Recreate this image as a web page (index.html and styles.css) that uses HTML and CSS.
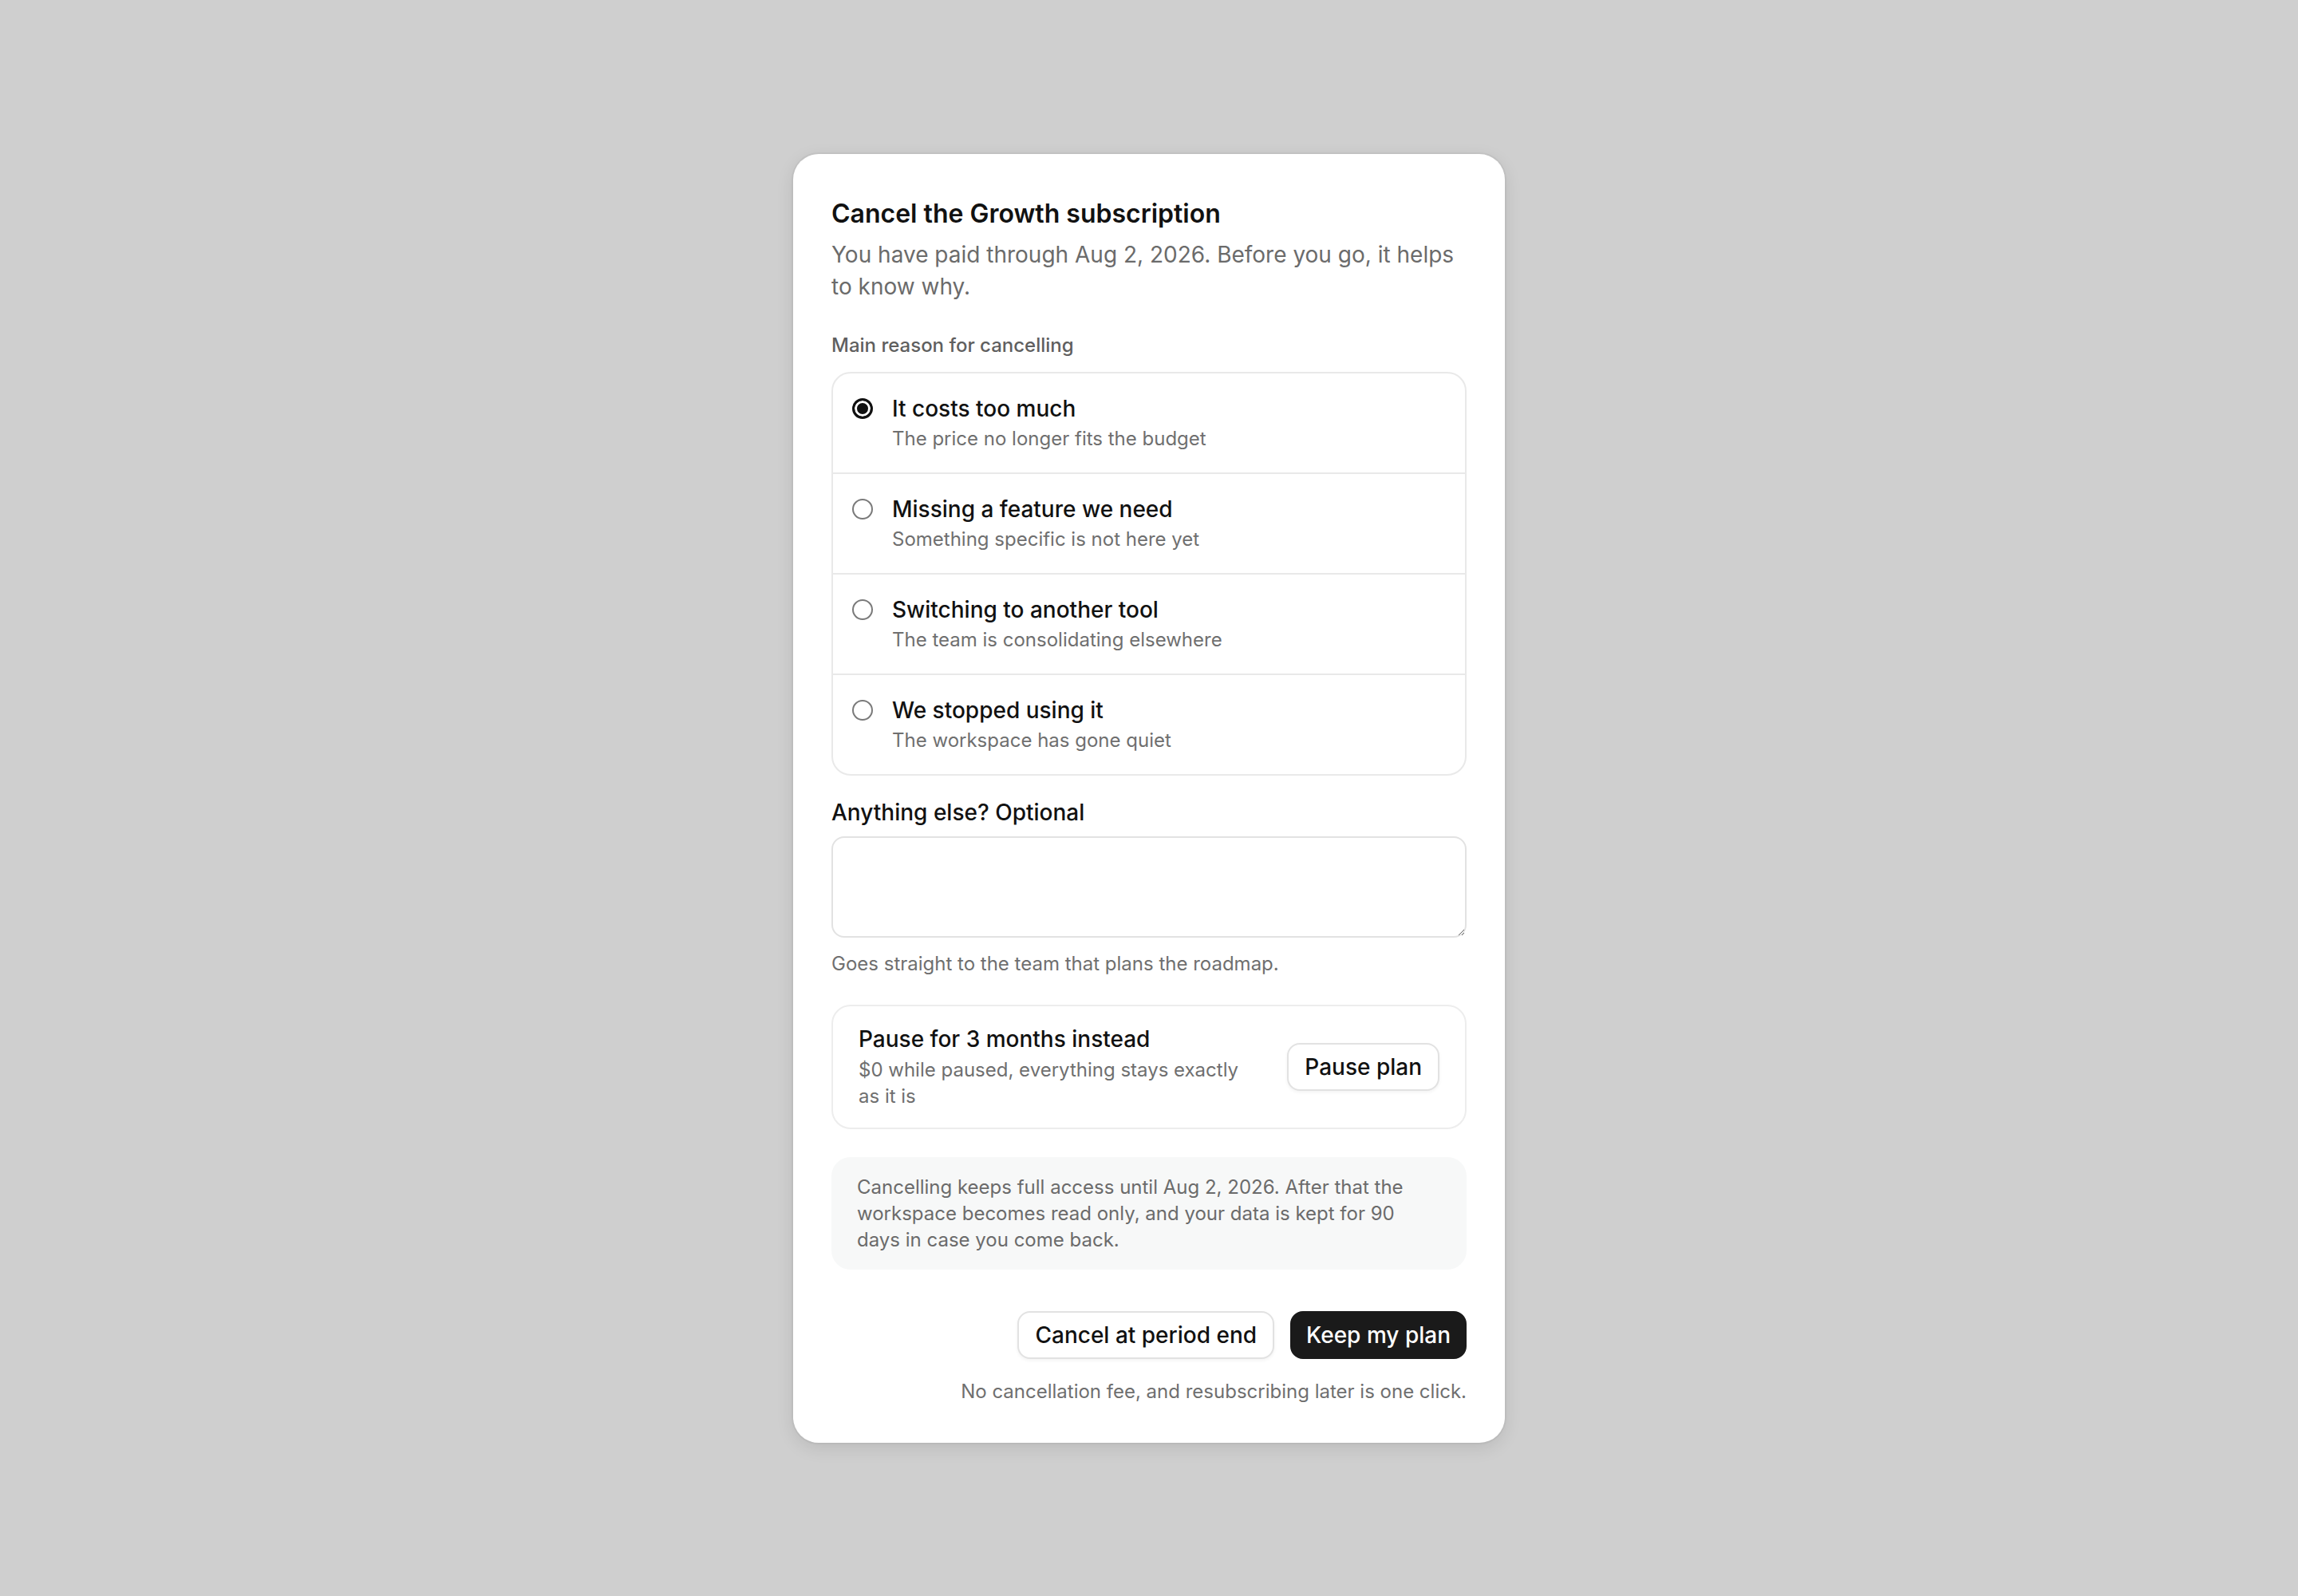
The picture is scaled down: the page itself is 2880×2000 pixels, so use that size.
FILE: index.html
```html
<!DOCTYPE html>
<html lang="en">
<head>
<meta charset="utf-8">
<title>Cancel the Growth subscription</title>
<link rel="stylesheet" href="styles.css">
</head>
<body>
<main class="card">
  <h1 class="title">Cancel the Growth subscription</h1>
  <p class="lead">You have paid through Aug 2, 2026. Before you go, it helps to know why.</p>

  <div class="field-label">Main reason for cancelling</div>
  <div class="options">
    <label class="option">
      <input class="radio" type="radio" name="reason" checked>
      <span class="option-text">
        <span class="option-title">It costs too much</span>
        <span class="option-sub">The price no longer fits the budget</span>
      </span>
    </label>
    <label class="option">
      <input class="radio" type="radio" name="reason">
      <span class="option-text">
        <span class="option-title">Missing a feature we need</span>
        <span class="option-sub">Something specific is not here yet</span>
      </span>
    </label>
    <label class="option">
      <input class="radio" type="radio" name="reason">
      <span class="option-text">
        <span class="option-title">Switching to another tool</span>
        <span class="option-sub">The team is consolidating elsewhere</span>
      </span>
    </label>
    <label class="option">
      <input class="radio" type="radio" name="reason">
      <span class="option-text">
        <span class="option-title">We stopped using it</span>
        <span class="option-sub">The workspace has gone quiet</span>
      </span>
    </label>
  </div>

  <label class="section-label" for="extra">Anything else? Optional</label>
  <textarea class="textarea" id="extra"></textarea>
  <div class="help">Goes straight to the team that plans the roadmap.</div>

  <div class="pause">
    <div class="pause-text">
      <div class="pause-title">Pause for 3 months instead</div>
      <div class="pause-sub">$0 while paused, everything stays exactly as it is</div>
    </div>
    <button class="btn btn-outline" type="button">Pause plan</button>
  </div>

  <div class="notice">Cancelling keeps full access until Aug 2, 2026. After that the workspace becomes read only, and your data is kept for 90 days in case you come back.</div>

  <div class="actions">
    <button class="btn btn-outline" type="button">Cancel at period end</button>
    <button class="btn btn-dark" type="button">Keep my plan</button>
  </div>
  <div class="footnote">No cancellation fee, and resubscribing later is one click.</div>
</main>
</body>
</html>
```

FILE: styles.css
```css
* {
  box-sizing: border-box;
}

html,
body {
  margin: 0;
  padding: 0;
}

body {
  min-height: 100vh;
  background: #cfcfcf;
  display: flex;
  align-items: center;
  justify-content: center;
  font-family: Inter, "Noto Sans", "Liberation Sans", sans-serif;
  color: #111111;
}

.card {
  width: 892px;
  background: #ffffff;
  border-radius: 32px;
  padding: 50px 48px 48px;
  box-shadow: 0 0 0 2px rgba(0, 0, 0, 0.04), 0 6px 22px rgba(0, 0, 0, 0.10);
}

.title {
  margin: 0;
  font-size: 32px;
  line-height: 50px;
  font-weight: 600;
  color: #111111;
}

.lead {
  margin: 6px 0 0;
  font-size: 28px;
  line-height: 40px;
  color: #6b6b6b;
}

.field-label {
  margin-top: 38px;
  font-size: 24px;
  line-height: 32px;
  font-weight: 500;
  color: #5f5f5f;
}

.options {
  margin-top: 17px;
  border: 2px solid #e9e9e9;
  border-radius: 24px;
  overflow: hidden;
}

.option {
  display: flex;
  align-items: flex-start;
  gap: 24px;
  padding: 26px 24px;
  cursor: pointer;
}

.option + .option {
  border-top: 2px solid #e9e9e9;
}

.radio {
  appearance: none;
  -webkit-appearance: none;
  flex: none;
  margin: 5px 0 0;
  width: 26px;
  height: 26px;
  border-radius: 50%;
  border: 2px solid #7a7a7a;
  background: #ffffff;
}

.radio:checked {
  border: 3px solid #111111;
  background: #111111;
  box-shadow: inset 0 0 0 3px #ffffff;
}

.option-text {
  display: flex;
  flex-direction: column;
}

.option-title {
  font-size: 28px;
  line-height: 36px;
  font-weight: 500;
  color: #111111;
}

.option-sub {
  margin-top: 4px;
  font-size: 24px;
  line-height: 32px;
  color: #6f6f6f;
}

.section-label {
  display: block;
  margin-top: 28px;
  font-size: 28px;
  line-height: 36px;
  font-weight: 500;
  color: #111111;
}

.textarea {
  display: block;
  width: 100%;
  height: 127px;
  margin-top: 12px;
  border: 2px solid #e2e2e2;
  border-radius: 16px;
  padding: 16px 20px;
  font-family: inherit;
  font-size: 28px;
  resize: vertical;
  background: #ffffff;
}

.help {
  margin-top: 17px;
  font-size: 24px;
  line-height: 32px;
  color: #6f6f6f;
}

.pause {
  margin-top: 35px;
  display: flex;
  align-items: center;
  gap: 48px;
  padding: 23px 32px;
  border: 2px solid #ededed;
  border-radius: 24px;
}

.pause-text {
  flex: 1;
}

.pause-title {
  font-size: 28px;
  line-height: 36px;
  font-weight: 500;
  color: #111111;
}

.pause-sub {
  margin-top: 4px;
  font-size: 24px;
  line-height: 33px;
  color: #6f6f6f;
}

.notice {
  margin-top: 35px;
  background: #f7f8f8;
  border-radius: 24px;
  padding: 21px 32px;
  font-size: 24px;
  line-height: 33px;
  color: #6b6b6b;
}

.actions {
  margin-top: 52px;
  display: flex;
  justify-content: flex-end;
  gap: 20px;
}

.btn {
  height: 60px;
  padding: 0 20px;
  border-radius: 16px;
  font-family: inherit;
  font-size: 28px;
  font-weight: 500;
  cursor: pointer;
  flex: none;
}

.btn-outline {
  background: #ffffff;
  color: #111111;
  border: 2px solid #e2e2e2;
  box-shadow: 0 2px 4px rgba(0, 0, 0, 0.05);
}

.btn-dark {
  padding: 0 18px;
  background: #1a1a1a;
  color: #ffffff;
  border: 2px solid #1a1a1a;
}

.footnote {
  margin-top: 25px;
  text-align: right;
  font-size: 24px;
  line-height: 32px;
  color: #6f6f6f;
}
```
